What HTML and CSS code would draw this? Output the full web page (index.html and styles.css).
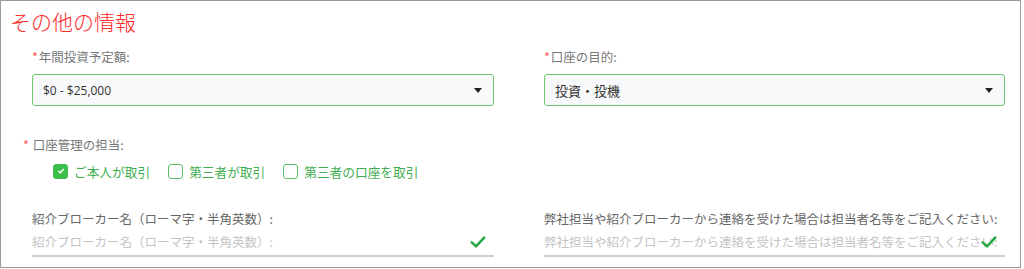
FILE: index.html
```html
<!DOCTYPE html>
<html lang="ja">
<head>
    <meta charset="UTF-8">
    <meta name="viewport" content="width=device-width, initial-scale=1.0">
    <title>その他の情報</title>
    <link rel="stylesheet" href="styles.css">
</head>
<body>
    <div class="panel">
        <h2 class="title">その他の情報</h2>

        <!-- 年間投資予定額 / 口座の目的 -->
        <div class="row">
            <div class="field">
                <div class="label"><span class="req">*</span>年間投資予定額:</div>
                <div class="select">
                    <span>$0 - $25,000</span>
                    <span class="caret"></span>
                </div>
            </div>
            <div class="field">
                <div class="label"><span class="req">*</span>口座の目的:</div>
                <div class="select">
                    <span class="jp">投資・投機</span>
                    <span class="caret"></span>
                </div>
            </div>
        </div>

        <!-- 口座管理の担当 -->
        <div class="label label-wide"><span class="req">*</span>口座管理の担当:</div>
        <div class="checks">
            <label class="check checked"><span class="box"><svg viewBox="0 0 10 10" width="8" height="8"><path d="M2 5.2 L4.1 7.2 L8 3" fill="none" stroke="#fff" stroke-width="1.8" stroke-linecap="round" stroke-linejoin="round"/></svg></span>ご本人が取引</label>
            <label class="check"><span class="box"></span>第三者が取引</label>
            <label class="check"><span class="box"></span>第三者の口座を取引</label>
        </div>

        <!-- 紹介ブローカー -->
        <div class="row row-inputs">
            <div class="field">
                <div class="label label-dark">紹介ブローカー名（ローマ字・半角英数）:</div>
                <div class="input">
                    <span class="placeholder">紹介ブローカー名（ローマ字・半角英数）:</span>
                    <svg class="ok" viewBox="0 0 16 14" width="16" height="14"><path d="M1.8 7.4 L6 11.4 L14.2 2.6" fill="none" stroke="#28a745" stroke-width="2.6" stroke-linecap="round" stroke-linejoin="round"/></svg>
                </div>
            </div>
            <div class="field">
                <div class="label label-dark">弊社担当や紹介ブローカーから連絡を受けた場合は担当者名等をご記入ください:</div>
                <div class="input">
                    <span class="placeholder">弊社担当や紹介ブローカーから連絡を受けた場合は担当者名等をご記入ください:</span>
                    <svg class="ok" viewBox="0 0 16 14" width="16" height="14"><path d="M1.8 7.4 L6 11.4 L14.2 2.6" fill="none" stroke="#28a745" stroke-width="2.6" stroke-linecap="round" stroke-linejoin="round"/></svg>
                </div>
            </div>
        </div>
    </div>
</body>
</html>
```

FILE: styles.css
```css
body {
    margin: 0;
    font-family: "Noto Sans CJK JP", "Open Sans", sans-serif;
    background: #fff;
}
.panel {
    width: 1021px;
    height: 268px;
    border: 1px solid #9a9a9a;
    padding: 0 15px 0 31px;
    box-sizing: border-box;
    overflow: hidden;
}
.title {
    margin: 0 0 0 -22px;
    padding-top: 6px;
    font-size: 21px;
    line-height: 28px;
    font-weight: 300;
    color: #ff2a2a;
}
.row {
    display: grid;
    grid-template-columns: 462px 461px;
    gap: 50px;
    margin-top: 13px;
}
.label {
    font-size: 12.5px;
    line-height: 18px;
    color: #777;
    white-space: nowrap;
}
.req {
    color: #f55;
    margin-right: 1px;
}
.select {
    margin-top: 8px;
    height: 32px;
    box-sizing: border-box;
    border: 1px solid #6cc66f;
    border-radius: 3px;
    background: #f8f9fa;
    display: flex;
    align-items: center;
    justify-content: space-between;
    padding: 0 11px 0 10px;
    font-family: "Open Sans", "Noto Sans CJK JP", sans-serif;
    font-size: 12px;
    color: #333;
}
.select .jp {
    font-family: "Noto Sans CJK JP", sans-serif;
    font-size: 13px;
}
.caret {
    width: 0;
    height: 0;
    border-left: 4.5px solid transparent;
    border-right: 4.5px solid transparent;
    border-top: 5px solid #222;
}
.label-wide {
    margin: 30px 0 0 -9px;
}
.label-wide .req {
    margin-right: 4px;
}
.checks {
    display: flex;
    gap: 18px;
    margin: 7px 0 0 21px;
    height: 20px;
    align-items: center;
}
.check {
    display: flex;
    align-items: center;
    gap: 6px;
    font-size: 12.7px;
    color: #3fae4f;
}
.box {
    width: 15px;
    height: 15px;
    box-sizing: border-box;
    border: 1.5px solid #5cbf66;
    border-radius: 3px;
    display: flex;
    align-items: center;
    justify-content: center;
}
.checked .box {
    background: #3cbf4c;
    border-color: #3cbf4c;
}
.row-inputs {
    margin-top: 29px;
}
.label-dark {
    color: #666;
}
.input {
    position: relative;
    margin-top: 2px;
    height: 27px;
    box-sizing: border-box;
    border-bottom: 2px solid #cfcfcf;
    display: flex;
    align-items: center;
    padding-bottom: 3px;
    overflow: hidden;
}
.placeholder {
    font-size: 12.5px;
    color: #c4c4c4;
    white-space: nowrap;
}
.ok {
    position: absolute;
    right: 8px;
    top: 5px;
}
```
